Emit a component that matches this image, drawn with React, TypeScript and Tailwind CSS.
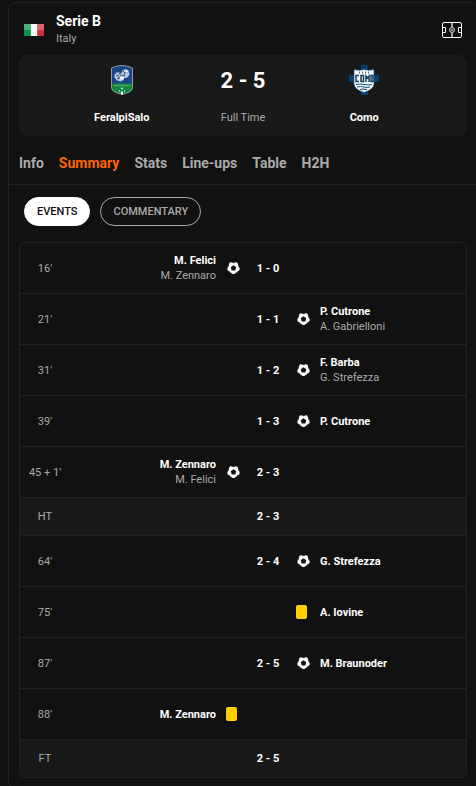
type Side = "home" | "away";

interface MatchEvent {
  time: string;
  score?: string;
  side?: Side;
  kind?: "goal" | "yellow" | "period";
  player?: string;
  assist?: string;
}

const events: MatchEvent[] = [
  { time: "16'", score: "1 - 0", side: "home", kind: "goal", player: "M. Felici", assist: "M. Zennaro" },
  { time: "21'", score: "1 - 1", side: "away", kind: "goal", player: "P. Cutrone", assist: "A. Gabrielloni" },
  { time: "31'", score: "1 - 2", side: "away", kind: "goal", player: "F. Barba", assist: "G. Strefezza" },
  { time: "39'", score: "1 - 3", side: "away", kind: "goal", player: "P. Cutrone" },
  { time: "45 + 1'", score: "2 - 3", side: "home", kind: "goal", player: "M. Zennaro", assist: "M. Felici" },
  { time: "HT", score: "2 - 3", kind: "period" },
  { time: "64'", score: "2 - 4", side: "away", kind: "goal", player: "G. Strefezza" },
  { time: "75'", side: "away", kind: "yellow", player: "A. Iovine" },
  { time: "87'", score: "2 - 5", side: "away", kind: "goal", player: "M. Braunoder" },
  { time: "88'", side: "home", kind: "yellow", player: "M. Zennaro" },
  { time: "FT", score: "2 - 5", kind: "period" },
];

const tabs = ["Info", "Summary", "Stats", "Line-ups", "Table", "H2H"];

function Flag() {
  return (
    <svg className="h-3 w-5" viewBox="0 0 20 12" aria-label="Italy flag">
      <rect width="7" height="12" fill="#0b9246" />
      <rect x="7" width="6" height="12" fill="#f8f8f8" />
      <rect x="13" width="7" height="12" fill="#d0303c" />
      <rect width="20" height="6" fill="#fff" opacity="0.26" />
      <path d="M7 0v12M13 0v12" stroke="#fff" strokeWidth="1" opacity="0.3" />
    </svg>
  );
}

function PitchIcon() {
  return (
    <svg className="h-4 w-5" viewBox="0 0 20 16" fill="none" stroke="#fff" aria-hidden="true">
      <rect x="0.5" y="0.5" width="19" height="15" rx="1.5" />
      <path d="M0.5 5.5h3v5h-3M19.5 5.5h-3v5h3" />
      <path d="M10 1v4M10 11v4" stroke="#a0a0a0" strokeWidth="2" />
      <circle cx="10" cy="8" r="2.5" stroke="#d0d0d0" />
      <circle cx="10" cy="8" r="1.5" fill="#888" stroke="none" />
    </svg>
  );
}

function FeralpiCrest() {
  return (
    <svg className="size-[30px]" viewBox="0 0 30 30" aria-hidden="true">
      <path d="M4.5 3Q9 .7 15 .5Q21 .7 25.5 3V22.5Q25.5 26 21 27.5L15 29.5L9 27.5Q4.5 26 4.5 22.5Z" fill="#194687" />
      <path d="M4.5 18.5h21v4q0 3.5-4.5 5L15 29.5L9 27.5q-4.5-1.5-4.5-5Z" fill="#118840" />
      <path d="M4.5 3Q9 .7 15 .5Q21 .7 25.5 3V22.5Q25.5 26 21 27.5L15 29.5L9 27.5Q4.5 26 4.5 22.5Z" fill="none" stroke="#8f9c9e" />
      <path d="M7.5 10l2-2.5h3l1.5 1.5 1.5-3.5 3-1.5 3 1.5 1 4-2 3-3 .5-1 2-2.5 1.5-4-1-2.5-3Z" fill="#bccbe2" />
      <path d="M9 11l2-1 1 2-2 2M12 8l2 3 3-1M16 6l2 2 3-1M18 8l-1 4M11 14l3-2" fill="none" stroke="#2f5893" />
      <path d="M13 12l3-1 1 2-2 2-2-1zM19 5l2 1-1 2-2-1z" fill="#fff" />
      <path d="M7 20.5h16" stroke="#62ac78" strokeDasharray="1.5 .6" strokeWidth="1.5" />
      <path d="M14 23.5h2M12 26h1M17 26h1" stroke="#c8e2cf" strokeWidth="1.5" />
      <path d="M14 26.5h2v3h-2z" fill="#fff" />
    </svg>
  );
}

function ComoCrest() {
  return (
    <svg className="size-[30px]" viewBox="0 0 30 30" aria-hidden="true">
      <path d="M12 0h7v30h-7zM0 10h30v7H0z" fill="#073e70" />
      <path d="M5 4.5Q10 6 15 4.5Q20 6 25 4.5V19Q25 24 15 27.5Q5 24 5 19Z" fill="#f3f7fa" stroke="#1a547f" strokeWidth=".6" />
      <path d="M10.5 6.5v2M13.5 6.5v2M16.5 6.5v2M19.5 6.5v2" stroke="#49728f" />
      <path d="M10 10.5H7v6h3M12 10.5h2.5v6H12zM17 17v-6l1.5 2 1.5-2v6M22 10.5h2v6h-2z" fill="none" stroke="#173f60" strokeWidth="1.5" />
      <path d="M7 19.5q4-1 8 0t8 0M8 22q3.5-1 7 0t6 0M11 24.5q3-1 7 0" fill="none" stroke="#0b5080" strokeWidth="1" />
    </svg>
  );
}

function Ball() {
  return (
    <svg className="size-3.5" viewBox="0 0 14 14" aria-label="Goal">
      <circle cx="7.5" cy="7" r="6.3" fill="#333" />
      <g fill="#fff">
        <circle cx="7.5" cy="7" r="5.2" />
        <circle cx="5" cy="3.2" r="1.9" />
        <circle cx="10" cy="3.2" r="1.9" />
        <circle cx="11.8" cy="8" r="1.9" />
        <circle cx="7.5" cy="11.2" r="1.9" />
        <circle cx="3.2" cy="8" r="1.9" />
      </g>
      <path d="M6.5 .9h2L7.5 2.5Z" fill="#333" />
      <path d="M7.5 4.2l2.8 2-1 3.3H5.7l-1-3.3Z" fill="#161616" />
    </svg>
  );
}

function EventIcon({ kind }: { kind: MatchEvent["kind"] }) {
  return (
    <span className="flex w-3.5 shrink-0">
      {kind === "goal" ? <Ball /> : <span className="h-3.5 w-[11px] rounded-xs bg-[#ffce00]" role="img" aria-label="Yellow card" />}
    </span>
  );
}

function EventSide({ event, side }: { event: MatchEvent; side: Side }) {
  const shown = event.side === side;
  return (
    <div className={side === "home" ? "flex min-w-0 flex-1 items-center justify-end gap-2.5 text-right" : "flex min-w-0 flex-1 flex-row-reverse items-center justify-end gap-2.5"}>
      {shown && (
        <>
          <div>
            <p className="font-bold text-white">{event.player}</p>
            {event.assist && <p>{event.assist}</p>}
          </div>
          <EventIcon kind={event.kind} />
        </>
      )}
    </div>
  );
}

function EventRow({ event }: { event: MatchEvent }) {
  return (
    <li className={event.kind === "period" ? "flex h-[38px] items-center border-b border-[#222] bg-[#191919] last:h-[37px] last:border-b-0" : "flex h-[51px] items-center border-b border-[#222]"}>
      <span className="w-[50px] shrink-0 text-center">{event.time}</span>
      <EventSide event={event} side="home" />
      <span className="w-14 shrink-0 text-center font-bold text-white">{event.score}</span>
      <EventSide event={event} side="away" />
    </li>
  );
}

function Team({ name, crest }: { name: string; crest: React.ReactNode }) {
  return (
    <div className="flex flex-1 flex-col items-center justify-between">
      {crest}
      <h2 className="font-bold text-white">{name}</h2>
    </div>
  );
}

export default function App() {
  return (
    <div className="overflow-hidden bg-[#111] pt-0.5 pl-2 font-[Roboto,sans-serif] text-[11px] leading-[15px] text-[#aaa]">
      <main className="-mr-0.5 -mb-0.5 rounded-lg border border-[#222]">
        <header className="flex items-center px-[15px] pt-2.5 pb-2">
          <Flag />
          <div className="ml-3 flex flex-1 flex-col gap-0.5 leading-4">
            <h1 className="text-sm leading-4 font-bold text-white">Serie B</h1>
            <p>Italy</p>
          </div>
          <button type="button" aria-label="Pitch view">
            <PitchIcon />
          </button>
        </header>

        <section className="mx-2.5 flex h-[81px] rounded-lg bg-[#191919] px-1 pt-2.5 pb-[11px]">
          <Team name="FeralpiSalo" crest={<FeralpiCrest />} />
          <div className="flex flex-col items-center justify-between">
            <p className="text-[22px] leading-8 font-bold text-white">2 - 5</p>
            <p>Full Time</p>
          </div>
          <Team name="Como" crest={<ComoCrest />} />
        </section>

        <nav className="flex h-[49px] items-center gap-[15px] border-b border-[#222] px-2.5 pt-1.5 text-sm font-bold">
          {tabs.map((tab) => (
            <a key={tab} href={`#${tab}`} className={tab === "Summary" ? "text-[#ff6400]" : "text-[#aaa]"}>
              {tab}
            </a>
          ))}
        </nav>

        <div className="flex gap-2.5 px-[15px] py-3 font-medium">
          <button type="button" className="h-[29px] rounded-full border border-white bg-white px-3 text-[#111]">
            EVENTS
          </button>
          <button type="button" className="h-[29px] rounded-full border border-[#aaa] px-3 text-[#aaa]">
            COMMENTARY
          </button>
        </div>

        <ol className="mx-2.5 mt-1 mb-2.5 overflow-hidden rounded-md border border-[#222]">
          {events.map((event) => (
            <EventRow key={event.time} event={event} />
          ))}
        </ol>
      </main>
    </div>
  );
}
